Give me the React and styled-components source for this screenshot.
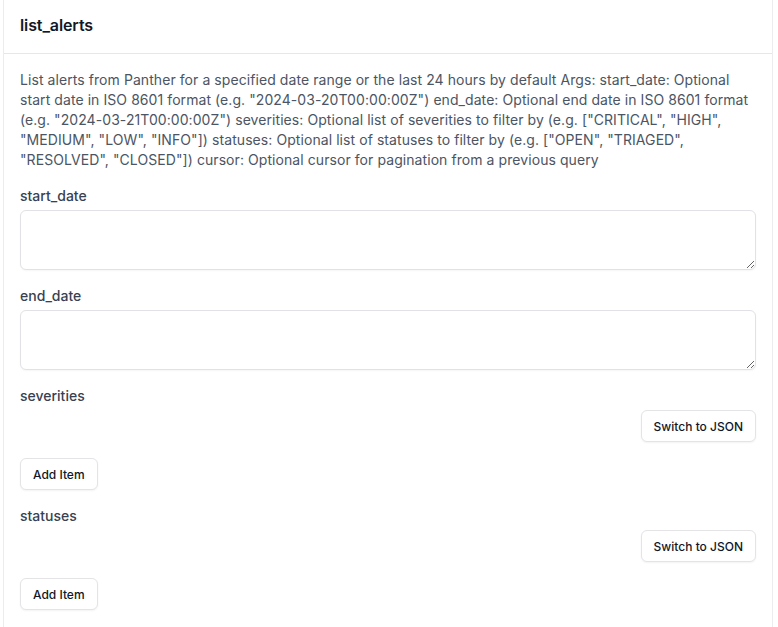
import React from "react";
import styled, { createGlobalStyle } from "styled-components";

const Global = createGlobalStyle`
  html, body { margin: 0; padding: 0; background: #ffffff; }
  body { font-family: Inter, "Noto Sans", "Liberation Sans", sans-serif; -webkit-font-smoothing: antialiased; }
  * { box-sizing: border-box; }
`;

const Card = styled.div`
  margin: 0 0 0 3px;
  width: 770px;
  background: #fff;
  border: 1px solid #ececee;
  border-top: none;
  border-radius: 0 0 8px 8px;
`;

const Header = styled.div`
  padding: 13px 16px 16px;
  border-bottom: 1px solid #e7e7ea;
`;

const Title = styled.h2`
  margin: 0;
  font-size: 16px;
  line-height: 24px;
  font-weight: 600;
  color: #111827;
  letter-spacing: -0.1px;
`;

const Body = styled.div`
  padding: 16px 16px 28px;
  display: flex;
  flex-direction: column;
  gap: 16px;
`;

const Description = styled.p`
  margin: 0;
  font-size: 14px;
  line-height: 20px;
  color: #4b5563;
  letter-spacing: 0.07px;
`;

const Field = styled.div`
  display: flex;
  flex-direction: column;
  gap: 4px;
`;

const Label = styled.label`
  font-size: 14px;
  line-height: 20px;
  font-weight: 500;
  color: #374151;
`;

const TextArea = styled.textarea`
  width: 100%;
  height: 60px;
  border: 1px solid #e2e2e6;
  border-radius: 6px;
  box-shadow: 0 1px 2px rgba(0, 0, 0, 0.04);
  font-family: inherit;
  font-size: 14px;
  padding: 8px 12px;
  resize: vertical;
  outline: none;
  display: block;
`;

const ButtonRow = styled.div`
  display: flex;
  justify-content: ${(p) => (p.$end ? "flex-end" : "flex-start")};
  margin-top: ${(p) => (p.$spaced ? "12px" : "0")};
`;

const Button = styled.button`
  height: 32px;
  padding: 0 12px;
  background: #fff;
  border: 1px solid #e4e4e7;
  border-radius: 6px;
  box-shadow: 0 1px 2px rgba(0, 0, 0, 0.05);
  font-family: inherit;
  font-size: 12px;
  font-weight: 500;
  color: #111827;
  cursor: pointer;
`;

const ArrayField = ({ name }) => (
  <Field>
    <Label>{name}</Label>
    <ButtonRow $end>
      <Button>Switch to JSON</Button>
    </ButtonRow>
    <ButtonRow $spaced>
      <Button>Add Item</Button>
    </ButtonRow>
  </Field>
);

export default function App() {
  return (
    <>
      <Global />
      <Card>
        <Header>
          <Title>list_alerts</Title>
        </Header>
        <Body>
          <Description>
            List alerts from Panther for a specified date range or the last 24 hours by default Args: start_date: Optional start date in ISO 8601 format (e.g. "2024-03-20T00:00:00Z") end_date: Optional end date in ISO 8601 format (e.g. "2024-03-21T00:00:00Z") severities: Optional list of severities to filter by (e.g. ["CRITICAL", "HIGH", "MEDIUM", "LOW", "INFO"]) statuses: Optional list of statuses to filter by (e.g. ["OPEN", "TRIAGED", "RESOLVED", "CLOSED"]) cursor: Optional cursor for pagination from a previous query
          </Description>
          <Field>
            <Label>start_date</Label>
            <TextArea />
          </Field>
          <Field>
            <Label>end_date</Label>
            <TextArea />
          </Field>
          <ArrayField name="severities" />
          <ArrayField name="statuses" />
        </Body>
      </Card>
    </>
  );
}
